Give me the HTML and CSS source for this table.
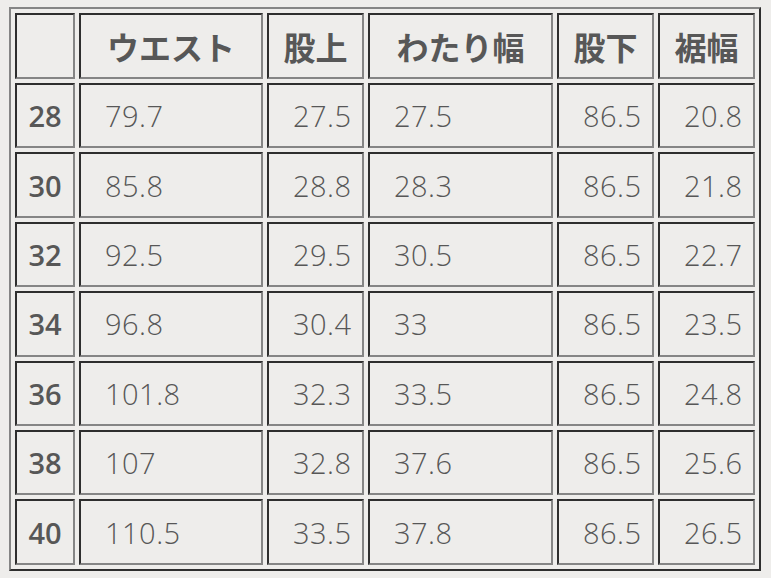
FILE: index.html
```html
<!DOCTYPE html>
<html lang="ja">
<head>
<meta charset="utf-8">
<title>サイズ表</title>
<link rel="stylesheet" href="styles.css">
</head>
<body>
<table class="size-table">
  <thead>
    <tr class="head-row">
      <th class="c-size"></th>
      <th class="c-waist">ウエスト</th>
      <th class="c-rise">股上</th>
      <th class="c-thigh">わたり幅</th>
      <th class="c-inseam">股下</th>
      <th class="c-hem">裾幅</th>
    </tr>
  </thead>
  <tbody>
    <tr><th>28</th><td>79.7</td><td>27.5</td><td>27.5</td><td>86.5</td><td>20.8</td></tr>
    <tr><th>30</th><td>85.8</td><td>28.8</td><td>28.3</td><td>86.5</td><td>21.8</td></tr>
    <tr><th>32</th><td>92.5</td><td>29.5</td><td>30.5</td><td>86.5</td><td>22.7</td></tr>
    <tr><th>34</th><td>96.8</td><td>30.4</td><td>33</td><td>86.5</td><td>23.5</td></tr>
    <tr><th>36</th><td>101.8</td><td>32.3</td><td>33.5</td><td>86.5</td><td>24.8</td></tr>
    <tr><th>38</th><td>107</td><td>32.8</td><td>37.6</td><td>86.5</td><td>25.6</td></tr>
    <tr><th>40</th><td>110.5</td><td>33.5</td><td>37.8</td><td>86.5</td><td>26.5</td></tr>
  </tbody>
</table>
</body>
</html>
```
FILE: styles.css
```css
html, body {
  margin: 0;
  background: #eeedeb;
}
body {
  padding: 7px 0 0 9px;
  color: #575757;
  font-family: "Open Sans", "Noto Sans CJK JP", sans-serif;
}
.size-table {
  table-layout: fixed;
  width: 752px;
  border-collapse: separate;
  border-spacing: 4px;
  border: 2px solid;
  border-color: #858585 #2e2e2e #2e2e2e #858585;
}
.size-table th,
.size-table td {
  box-sizing: border-box;
  border: 2px solid;
  border-color: #2e2e2e #858585 #858585 #2e2e2e;
  padding: 0;
  vertical-align: middle;
  white-space: nowrap;
}
.size-table .head-row th {
  height: 66px;
  font-family: "Noto Sans CJK JP", sans-serif;
  font-weight: 700;
  font-size: 32px;
  text-align: center;
}
.c-size { width: 60px; }
.c-waist { width: 184px; }
.c-rise { width: 97px; }
.c-thigh { width: 185px; }
.c-inseam { width: 97px; }
.c-hem { width: 97px; }
.size-table tbody tr {
  height: 65.4px;
}
.size-table tbody th {
  font-weight: 600;
  font-size: 29px;
  text-align: center;
}
.size-table tbody td {
  font-weight: 300;
  font-size: 29px;
  letter-spacing: 0.5px;
  text-align: left;
  padding-left: 24px;
}
```
